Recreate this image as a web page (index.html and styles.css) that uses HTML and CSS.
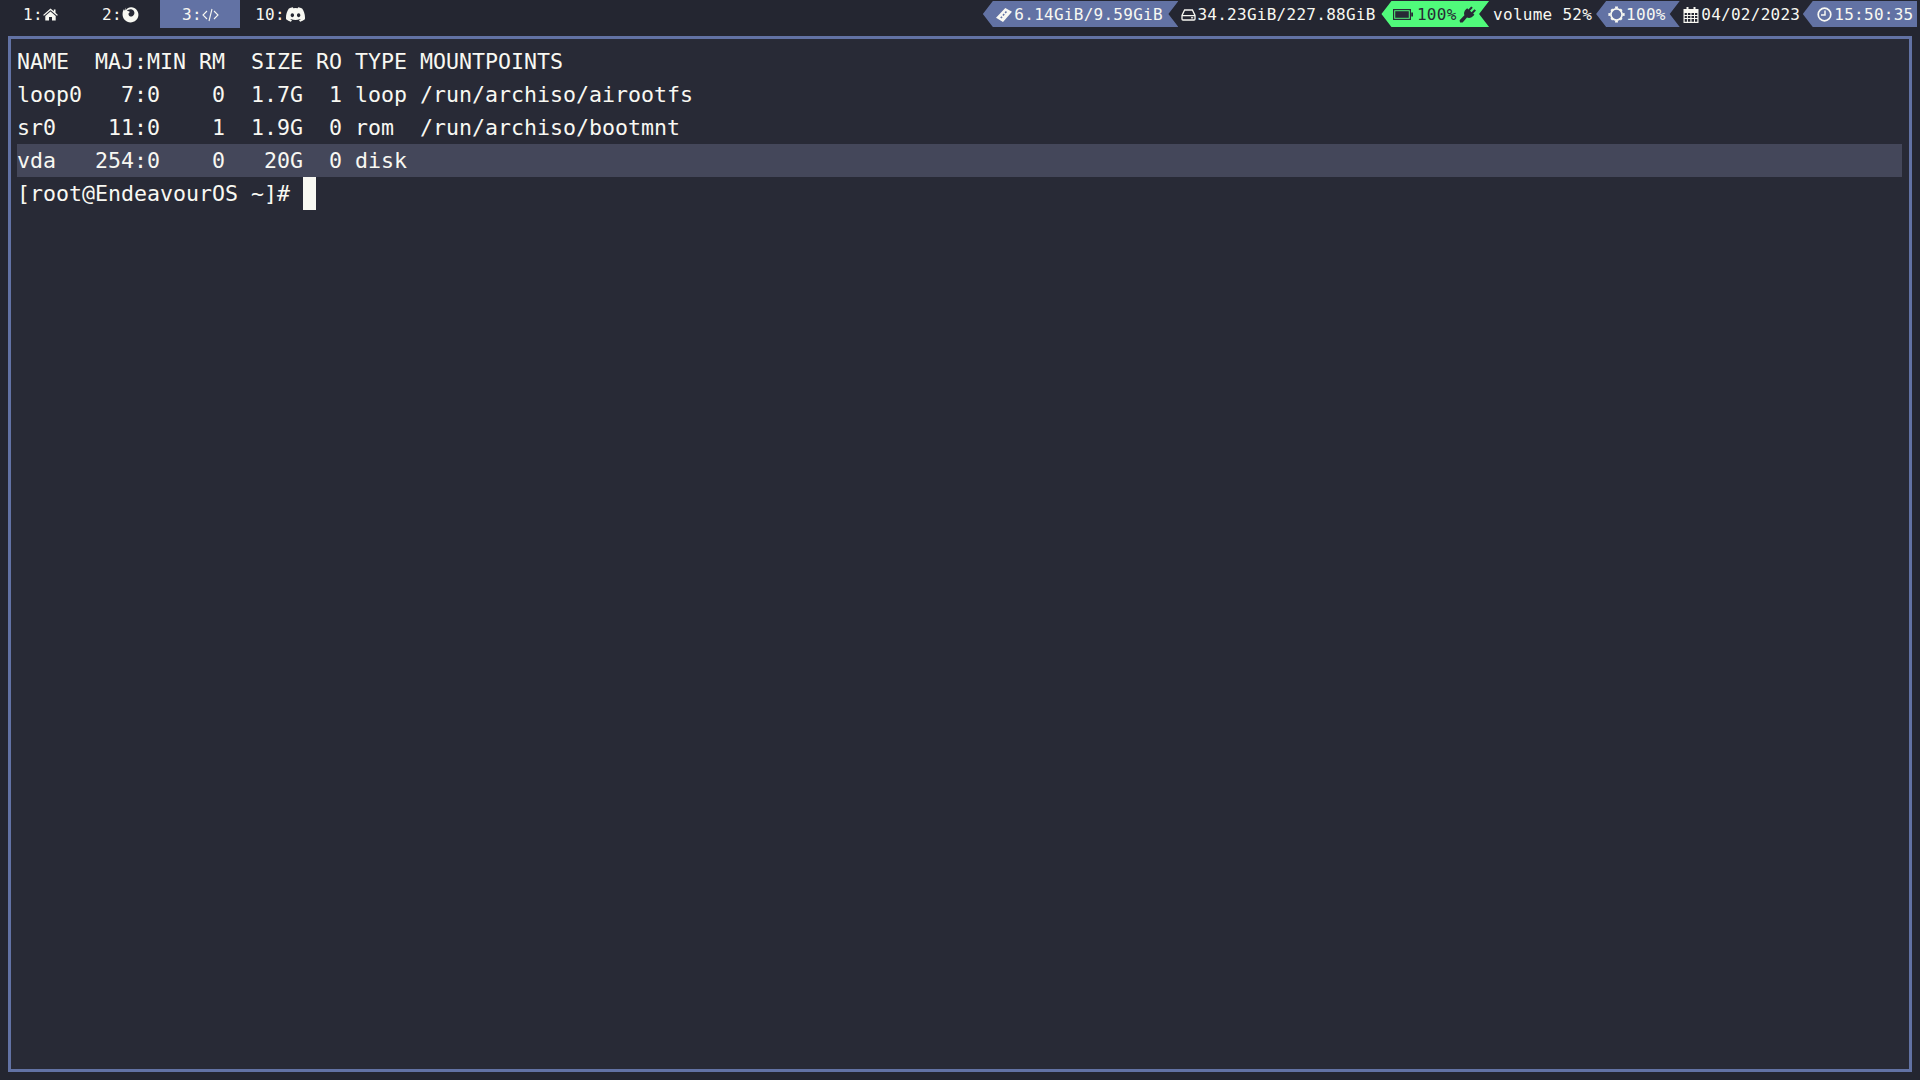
FILE: index.html
```html
<!DOCTYPE html>
<html lang="en">
<head>
<meta charset="utf-8">
<title>Terminal</title>
<link rel="stylesheet" href="styles.css">
</head>
<body>
<div class="desktop">
  <header class="bar">
    <nav class="workspaces">
      <div class="ws"><span>1:</span>
        <svg class="ic-home" viewBox="0 0 16 14"><path fill="#f8f8f2" d="M8 0.5 L11.6 3.6 V1.5 H13.4 V5.2 L16 7.5 L15 8.4 L8 2.5 L1 8.4 L0 7.5 Z M8 3.8 L13.6 8.5 V13.5 H9.6 V9.6 H6.4 V13.5 H2.4 V8.5 Z"/></svg>
      </div>
      <div class="ws"><span>2:</span>
        <svg class="ic-fox" viewBox="0 0 18 18"><path fill="#f8f8f2" d="M4.6 1.2 C3.6 2.6 3.6 3.6 3.9 4.4 C5.4 2.4 7.6 1.2 10 1.4 C14.4 1.8 17.6 5.4 17.4 9.6 C17.2 14 13.4 17.4 9 17.4 C4.4 17.4 0.6 13.6 0.6 9 C0.6 6.4 1.2 4.6 2.2 3.2 C2.2 4 2.4 4.6 2.6 5 C3 3.4 3.6 2.2 4.6 1.2 Z"/><path fill="#282a36" d="M9.6 3.4 C7.6 3.2 6 4 5.2 5.4 C6.6 5 7.4 5.6 8.4 6.4 C7.6 7.4 6.8 7.6 6.9 8.9 C7.2 10.9 9.6 11.7 11.4 10.5 C13 9.4 13.6 7.4 12.8 5.7 C12.2 4.4 11 3.6 9.6 3.4 Z"/></svg>
      </div>
      <div class="ws active"><span>3:</span>
        <svg class="ic-code" viewBox="0 0 17 14" fill="none" stroke="#f8f8f2" stroke-width="1.1"><path d="M5 3 L1 7 L5 11 M12 3 L16 7 L12 11 M10 1 L7 13"/></svg>
      </div>
      <div class="ws wide"><span>10:</span>
        <svg class="ic-discord" viewBox="0 0 24 24"><path fill="#f8f8f2" d="M20.317 4.37a19.791 19.791 0 0 0-4.885-1.515.074.074 0 0 0-.079.037c-.21.375-.444.864-.608 1.25a18.27 18.27 0 0 0-5.487 0 12.64 12.64 0 0 0-.617-1.25.077.077 0 0 0-.079-.037A19.736 19.736 0 0 0 3.677 4.37a.07.07 0 0 0-.032.027C.533 9.046-.32 13.58.099 18.057a.082.082 0 0 0 .031.057 19.9 19.9 0 0 0 5.993 3.03.078.078 0 0 0 .084-.028 14.09 14.09 0 0 0 1.226-1.994.076.076 0 0 0-.041-.106 13.107 13.107 0 0 1-1.872-.892.077.077 0 0 1-.008-.128 10.2 10.2 0 0 0 .372-.292.074.074 0 0 1 .077-.01c3.928 1.793 8.18 1.793 12.062 0a.074.074 0 0 1 .078.01c.12.098.246.198.373.292a.077.077 0 0 1-.006.127 12.299 12.299 0 0 1-1.873.892.077.077 0 0 0-.041.107c.36.698.772 1.362 1.225 1.993a.076.076 0 0 0 .084.028 19.839 19.839 0 0 0 6.002-3.03.077.077 0 0 0 .032-.054c.5-5.177-.838-9.674-3.549-13.66a.061.061 0 0 0-.031-.03zM8.02 15.33c-1.183 0-2.157-1.085-2.157-2.419 0-1.333.956-2.419 2.157-2.419 1.21 0 2.176 1.096 2.157 2.42 0 1.333-.956 2.418-2.157 2.418zm7.975 0c-1.183 0-2.157-1.085-2.157-2.419 0-1.333.955-2.419 2.157-2.419 1.21 0 2.176 1.096 2.157 2.42 0 1.333-.946 2.418-2.157 2.418z"/></svg>
      </div>
    </nav>
    <div class="modules">
      <div class="mod pill mem">
        <svg class="ic-mem" viewBox="0 0 16 14"><path fill="#f8f8f2" fill-rule="evenodd" d="M9.3 0 L16 3.8 L7 14 L0 9.8 Z M9.8 3 L8.6 4.4 L9.8 5.4 L11 4 Z M7.6 5.6 L6.4 7 L7.6 8 L8.8 6.6 Z M5.4 8.2 L4.2 9.6 L5.4 10.6 L6.6 9.2 Z"/></svg>
        <span>6.14GiB/9.59GiB</span>
      </div>
      <div class="mod disk">
        <svg class="ic-disk" viewBox="0 0 15 12" fill="none" stroke="#f8f8f2" stroke-width="1.3"><path d="M3.6 1 H11.4 L14 6.4 V10 Q14 11 13 11 H2 Q1 11 1 10 V6.4 Z M1 6.6 H14"/><path d="M10 8.8 H12.2" stroke-width="1.2"/></svg>
        <span>34.23GiB/227.88GiB</span>
      </div>
      <div class="mod pill bat">
        <svg class="ic-bat" viewBox="0 0 20 11"><path fill="none" stroke="#282a36" stroke-width="1.2" d="M0.6 0.6 H17.4 V10.4 H0.6 Z"/><rect x="2.2" y="2.2" width="13.6" height="6.6" fill="#282a36"/><rect x="18.2" y="3.5" width="1.8" height="4" fill="#282a36"/></svg>
        <span>100%</span>
        <svg class="ic-plug" viewBox="0 0 18 17"><path fill="#282a36" d="M12.2 0.4 L13.8 1.8 L11 4.8 L12.6 6.2 L15.4 3.2 L17 4.6 L14.2 7.6 L15.4 8.7 L14.2 10 C12.4 11.9 10 12.4 8 11.5 L3.6 16.6 L1 16.6 L0.6 14.2 L5.4 9.2 C4.6 7.4 5.2 5.2 6.8 3.6 L8.2 2.3 L9.4 3.4 Z"/></svg>
      </div>
      <div class="mod vol"><span>volume 52%</span></div>
      <div class="mod pill bright">
        <svg class="ic-bright" viewBox="0 0 17 17"><circle cx="8.5" cy="8.5" r="5.6" fill="none" stroke="#f8f8f2" stroke-width="1.7"/><path fill="#f8f8f2" d="M7 0.4 H10 L9.8 2.6 H7.2 Z M7 16.6 H10 L9.8 14.4 H7.2 Z M0.4 7 V10 L2.6 9.8 V7.2 Z M16.6 7 V10 L14.4 9.8 V7.2 Z M2.4 4.2 L4.2 2.4 L5.4 3.8 L3.8 5.4 Z M14.6 4.2 L12.8 2.4 L11.6 3.8 L13.2 5.4 Z M2.4 12.8 L4.2 14.6 L5.4 13.2 L3.8 11.6 Z M14.6 12.8 L12.8 14.6 L11.6 13.2 L13.2 11.6 Z"/></svg>
        <span>100%</span>
      </div>
      <div class="mod cal">
        <svg class="ic-cal" viewBox="0 0 15 16"><path fill="#f8f8f2" fill-rule="evenodd" d="M3 0 H5 V2 H10 V0 H12 V2 H15 V16 H0 V2 H3 Z M1.2 6 V8 H3.4 V6 Z M4.4 6 V8 H6.9 V6 Z M8 6 V8 H10.5 V6 Z M11.5 6 V8 H13.8 V6 Z M1.2 9 V11 H3.4 V9 Z M4.4 9 V11 H6.9 V9 Z M8 9 V11 H10.5 V9 Z M11.5 9 V11 H13.8 V9 Z M1.2 12 V14.8 H3.4 V12 Z M4.4 12 V14.8 H6.9 V12 Z M8 12 V14.8 H10.5 V12 Z M11.5 12 V14.8 H13.8 V12 Z"/></svg>
        <span>04/02/2023</span>
      </div>
      <div class="mod pill clock">
        <svg class="ic-clock" viewBox="0 0 15 15" fill="none" stroke="#f8f8f2" stroke-width="1.7"><circle cx="7.5" cy="7.5" r="6.3"/><path d="M8 3.4 V8 H4" stroke-width="1.5"/></svg>
        <span>15:50:35</span>
      </div>
    </div>
  </header>
  <main class="window">
    <div class="line">NAME  MAJ:MIN RM  SIZE RO TYPE MOUNTPOINTS</div>
    <div class="line">loop0   7:0    0  1.7G  1 loop /run/archiso/airootfs</div>
    <div class="line">sr0    11:0    1  1.9G  0 rom  /run/archiso/bootmnt</div>
    <div class="line selected">vda   254:0    0   20G  0 disk </div>
    <div class="line">[root@EndeavourOS ~]# <span class="cursor"></span></div>
  </main>
</div>
</body>
</html>
```
FILE: styles.css
```css
* { box-sizing: border-box; }
html, body { margin: 0; height: 100%; }
body { background: #242631; color: #f8f8f2; font-family: "DejaVu Sans Mono", "Liberation Mono", monospace; overflow: hidden; }
.desktop { height: 100vh; display: flex; flex-direction: column; }

.bar { height: 36px; flex: none; display: flex; justify-content: space-between; align-items: flex-start; font-size: 16px; letter-spacing: 0.27px; padding-right: 3px; }
.bar span { white-space: pre; }
.workspaces { display: flex; }
.ws { min-width: 80px; height: 28px; display: flex; align-items: center; justify-content: center; padding-top: 1px; padding-left: 1px; }
.ws.wide { gap: 1px; padding-left: 0; }
.ws.active { background: #6272a4; }

.modules { display: flex; margin-top: 1px; height: 26px; }
.mod { display: flex; align-items: center; height: 26px; padding-top: 1px; }
.pill { background: #6272a4; clip-path: polygon(10px 0, 100% 0, calc(100% - 10px) 50%, 100% 100%, 10px 100%, 0 50%); }

.mem { padding-right: 15.5px; padding-left: 13px; gap: 2.5px; }
.disk { padding-right: 5.8px; padding-left: 2.5px; gap: 1.5px; }
.bat { background: #50fa7b; color: #282a36; padding-right: 12px; padding-left: 12px; }
.vol { padding-right: 4px; padding-left: 4px; }
.bright { padding-right: 14px; padding-left: 11.5px; gap: 1.5px; }
.cal { padding-right: 2.5px; padding-left: 3px; gap: 2.5px; }
.clock { padding-right: 3.5px; padding-left: 14px; gap: 2.5px; clip-path: polygon(10px 0, 100% 0, 100% 100%, 10px 100%, 0 50%); }

svg { display: block; flex: none; }
.ic-home { width: 15px; height: 13px; }
.ic-fox { width: 17px; height: 17px; }
.ic-code { width: 17px; height: 14px; }
.ic-discord { width: 19px; height: 19px; }
.ic-mem { width: 16px; height: 14px; }
.ic-disk { width: 15px; height: 12px; }
.ic-bat { width: 20px; height: 11px; margin-right: 3.5px; }
.ic-plug { width: 18px; height: 17px; margin-left: 2.5px; }
.ic-bright { width: 17px; height: 17px; }
.ic-cal { width: 16px; height: 16px; }
.ic-clock { width: 15px; height: 15px; }

.window { flex: 1; margin: 0 8px 8px; border: 3px solid #6272a4; background: #282a36; padding: 6px 7px 0 6px; font-size: 21.6px; line-height: 33px; letter-spacing: 0; }
.line { height: 33px; white-space: pre; }
.selected { background: #44475a; }
.cursor { display: inline-block; width: 13px; height: 33px; background: #f8f8f2; vertical-align: top; }
```
